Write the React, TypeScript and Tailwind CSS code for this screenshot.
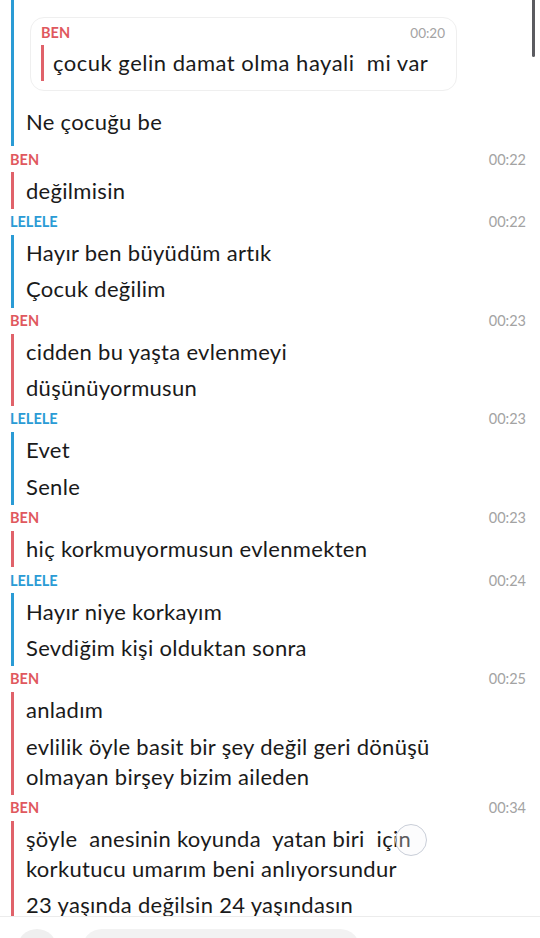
import React from "react";

type Group = { who: "BEN" | "LELELE"; time: string; msgs: string[] };

const groups: Group[] = [
  { who: "BEN", time: "00:22", msgs: ["değilmisin"] },
  { who: "LELELE", time: "00:22", msgs: ["Hayır ben büyüdüm artık", "Çocuk değilim"] },
  { who: "BEN", time: "00:23", msgs: ["cidden bu yaşta evlenmeyi", "düşünüyormusun"] },
  { who: "LELELE", time: "00:23", msgs: ["Evet", "Senle"] },
  { who: "BEN", time: "00:23", msgs: ["hiç korkmuyormusun evlenmekten"] },
  { who: "LELELE", time: "00:24", msgs: ["Hayır niye korkayım", "Sevdiğim kişi olduktan sonra"] },
  {
    who: "BEN",
    time: "00:25",
    msgs: ["anladım", "evlilik öyle basit bir şey değil geri dönüşü\nolmayan birşey bizim aileden"],
  },
  {
    who: "BEN",
    time: "00:34",
    msgs: [
      "şöyle  anesinin koyunda  yatan biri  için\nkorkutucu umarım beni anlıyorsundur",
      "23 yaşında değilsin 24 yaşındasın",
    ],
  },
];

function Message({ text }: { text: string }) {
  return (
    <div className="pl-[12px] py-[3.2px] text-[22px] leading-[30px] tracking-[0.3px] text-[#1a1a1a] whitespace-pre-wrap">
      {text}
    </div>
  );
}

function LabelRow({ who, time }: { who: string; time: string }) {
  return (
    <div className="h-[26px] flex items-center justify-between pl-[10px] pr-[14px]">
      <span
        className={
          "text-[14.5px] font-bold " + (who === "BEN" ? "text-[#e0585e]" : "text-[#2a9bd5]")
        }
      >
        {who}
      </span>
      <span className="text-[14.5px] text-[#a3a3a3]">{time}</span>
    </div>
  );
}

export default function App() {
  return (
    <div className="relative w-[540px] h-[938px] bg-white overflow-hidden font-['Lato',sans-serif]">
      <div className="h-[917px] overflow-hidden border-b border-[#ececec]">
        {/* first group, its label is scrolled off the top */}
        <div className="ml-[11px] border-l-[3px] border-[#2a9bd5] pb-[6px]">
          <div className="pt-[17px] pl-[16px]">
            <div className="w-[427px] rounded-[14px] border border-[#efefef] pt-[6px] pb-[9px] pl-[10px] pr-[11px]">
              <div className="flex items-center justify-between h-[18px]">
                <span className="text-[14.5px] font-bold text-[#e0585e]">BEN</span>
                <span className="text-[13.5px] text-[#a3a3a3]">00:20</span>
              </div>
              <div className="mt-[3px] border-l-[3px] border-[#e0626a]">
                <div className="pl-[9px] py-[3px] text-[22px] leading-[30px] tracking-[0.5px] text-[#1a1a1a] whitespace-pre-wrap">
                  çocuk gelin damat olma hayali  mi var
                </div>
              </div>
            </div>
          </div>
          <div className="mt-[13px]">
            <Message text="Ne çocuğu be" />
          </div>
        </div>

        {groups.map((g, i) => (
          <div key={i}>
            <LabelRow who={g.who} time={g.time} />
            <div
              className={
                "ml-[11px] border-l-[3px] " +
                (g.who === "BEN" ? "border-[#e0626a]" : "border-[#2a9bd5]")
              }
            >
              {g.msgs.map((m, j) => (
                <Message key={j} text={m} />
              ))}
            </div>
          </div>
        ))}
      </div>

      {/* bottom input bar, cut off by the screen edge */}
      <div className="flex items-start gap-[25px] pl-[17px] pt-[12px]">
        <div className="w-[40px] h-[40px] rounded-full bg-[#efefef]" />
        <div className="w-[278px] h-[40px] rounded-full bg-[#f2f2f2]" />
      </div>

      {/* touch indicator */}
      <div className="absolute left-[395px] top-[824px] w-[32px] h-[32px] rounded-full border-[1.5px] border-[#c9ced8] bg-[#f4f6fa]/30" />

      {/* scrollbar */}
      <div className="absolute left-[532px] top-0 w-[3px] h-[57px] rounded-b bg-[#5b5b60]" />
    </div>
  );
}
